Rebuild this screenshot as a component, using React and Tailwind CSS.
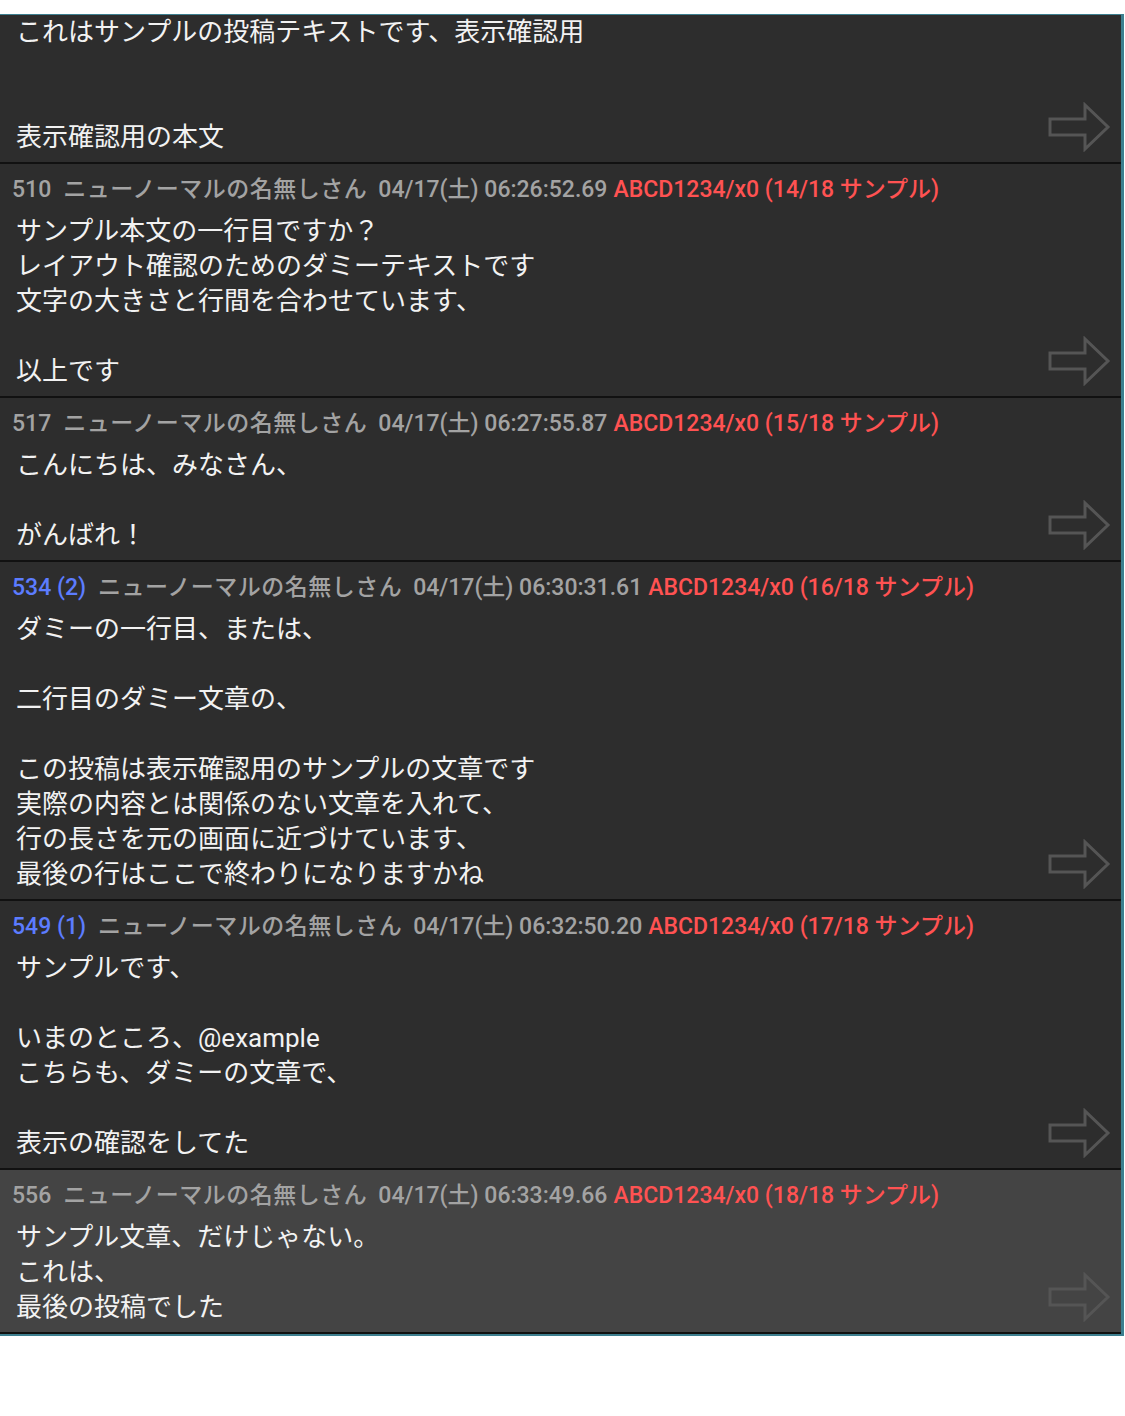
import React from 'react';

// Placeholder posts: same structure (lines, blank lines, headers) as the reference thread
const posts = [
  {
    partial: true,
    lines: ['これはサンプルの投稿テキストです、表示確認用', '', '', '表示確認用の本文'],
  },
  {
    no: '510',
    date: '04/17(土) 06:26:52.69',
    id: 'ABCD1234/x0 (14/18 サンプル)',
    lines: ['サンプル本文の一行目ですか？', 'レイアウト確認のためのダミーテキストです', '文字の大きさと行間を合わせています、', '', '以上です'],
  },
  {
    no: '517',
    date: '04/17(土) 06:27:55.87',
    id: 'ABCD1234/x0 (15/18 サンプル)',
    lines: ['こんにちは、みなさん、', '', 'がんばれ！'],
  },
  {
    no: '534',
    replies: '(2)',
    date: '04/17(土) 06:30:31.61',
    id: 'ABCD1234/x0 (16/18 サンプル)',
    lines: [
      'ダミーの一行目、または、',
      '',
      '二行目のダミー文章の、',
      '',
      'この投稿は表示確認用のサンプルの文章です',
      '実際の内容とは関係のない文章を入れて、',
      '行の長さを元の画面に近づけています、',
      '最後の行はここで終わりになりますかね',
    ],
  },
  {
    no: '549',
    replies: '(1)',
    date: '04/17(土) 06:32:50.20',
    id: 'ABCD1234/x0 (17/18 サンプル)',
    lines: ['サンプルです、', '', 'いまのところ、@example', 'こちらも、ダミーの文章で、', '', '表示の確認をしてた'],
  },
  {
    no: '556',
    date: '04/17(土) 06:33:49.66',
    id: 'ABCD1234/x0 (18/18 サンプル)',
    lines: ['サンプル文章、だけじゃない。', 'これは、', '最後の投稿でした'],
    active: true,
  },
];

const font = { fontFamily: 'Roboto, "Noto Sans CJK JP", sans-serif' };

const Arrow = () => (
  <svg width="64" height="50" viewBox="0 0 64 50" className="absolute right-[10px] bottom-[10px]">
    <path
      d="M3 17 H38 V3 L61 25 L38 47 V33 H3 Z"
      fill="none"
      stroke="#555555"
      strokeWidth="3"
      strokeLinejoin="miter"
    />
  </svg>
);

const Post = ({ post }) => (
  <div
    className={`relative px-[16px] pb-[7px] ${post.partial ? 'pt-0' : 'pt-[10px]'} ${
      post.active ? 'bg-[#444444]' : 'bg-[#2d2d2d]'
    } border-b-2 border-[#111111]`}
  >
    {!post.partial && (
      <div className="h-[32px] leading-[32px] text-[23px] whitespace-nowrap -ml-[4px] flex gap-[12px] font-medium">
        {post.replies ? (
          <span className="text-[#5c7cff]">
            {post.no} {post.replies}
          </span>
        ) : (
          <span className="text-[#a3a3a3]">{post.no}</span>
        )}
        <span className="text-[#a3a3a3] tracking-[0.5px]">ニューノーマルの名無しさん</span>
        <span className="text-[#a3a3a3] -ml-[1px]">{post.date}</span>
        <span className="text-[#ff5252] -ml-[6px]">{post.id}</span>
      </div>
    )}
    <div className={`${post.partial ? '' : 'mt-[8px]'} text-[26px] leading-[35px] text-[#f2f2f2]`}>
      {post.lines.map((l, i) => (
        <div key={i} className="h-[35px] whitespace-nowrap">
          {l || '\u00a0'}
        </div>
      ))}
    </div>
    <Arrow />
  </div>
);

export default function App() {
  return (
    <div className="w-[1125px] h-[1416px] bg-white pt-[14px]" style={font}>
      <div className="w-[1124px] border-t border-b-2 border-r-[3px] border-[#3d7f8f] bg-[#2d2d2d]">
        {posts.map((p, i) => (
          <Post key={i} post={p} />
        ))}
      </div>
    </div>
  );
}
